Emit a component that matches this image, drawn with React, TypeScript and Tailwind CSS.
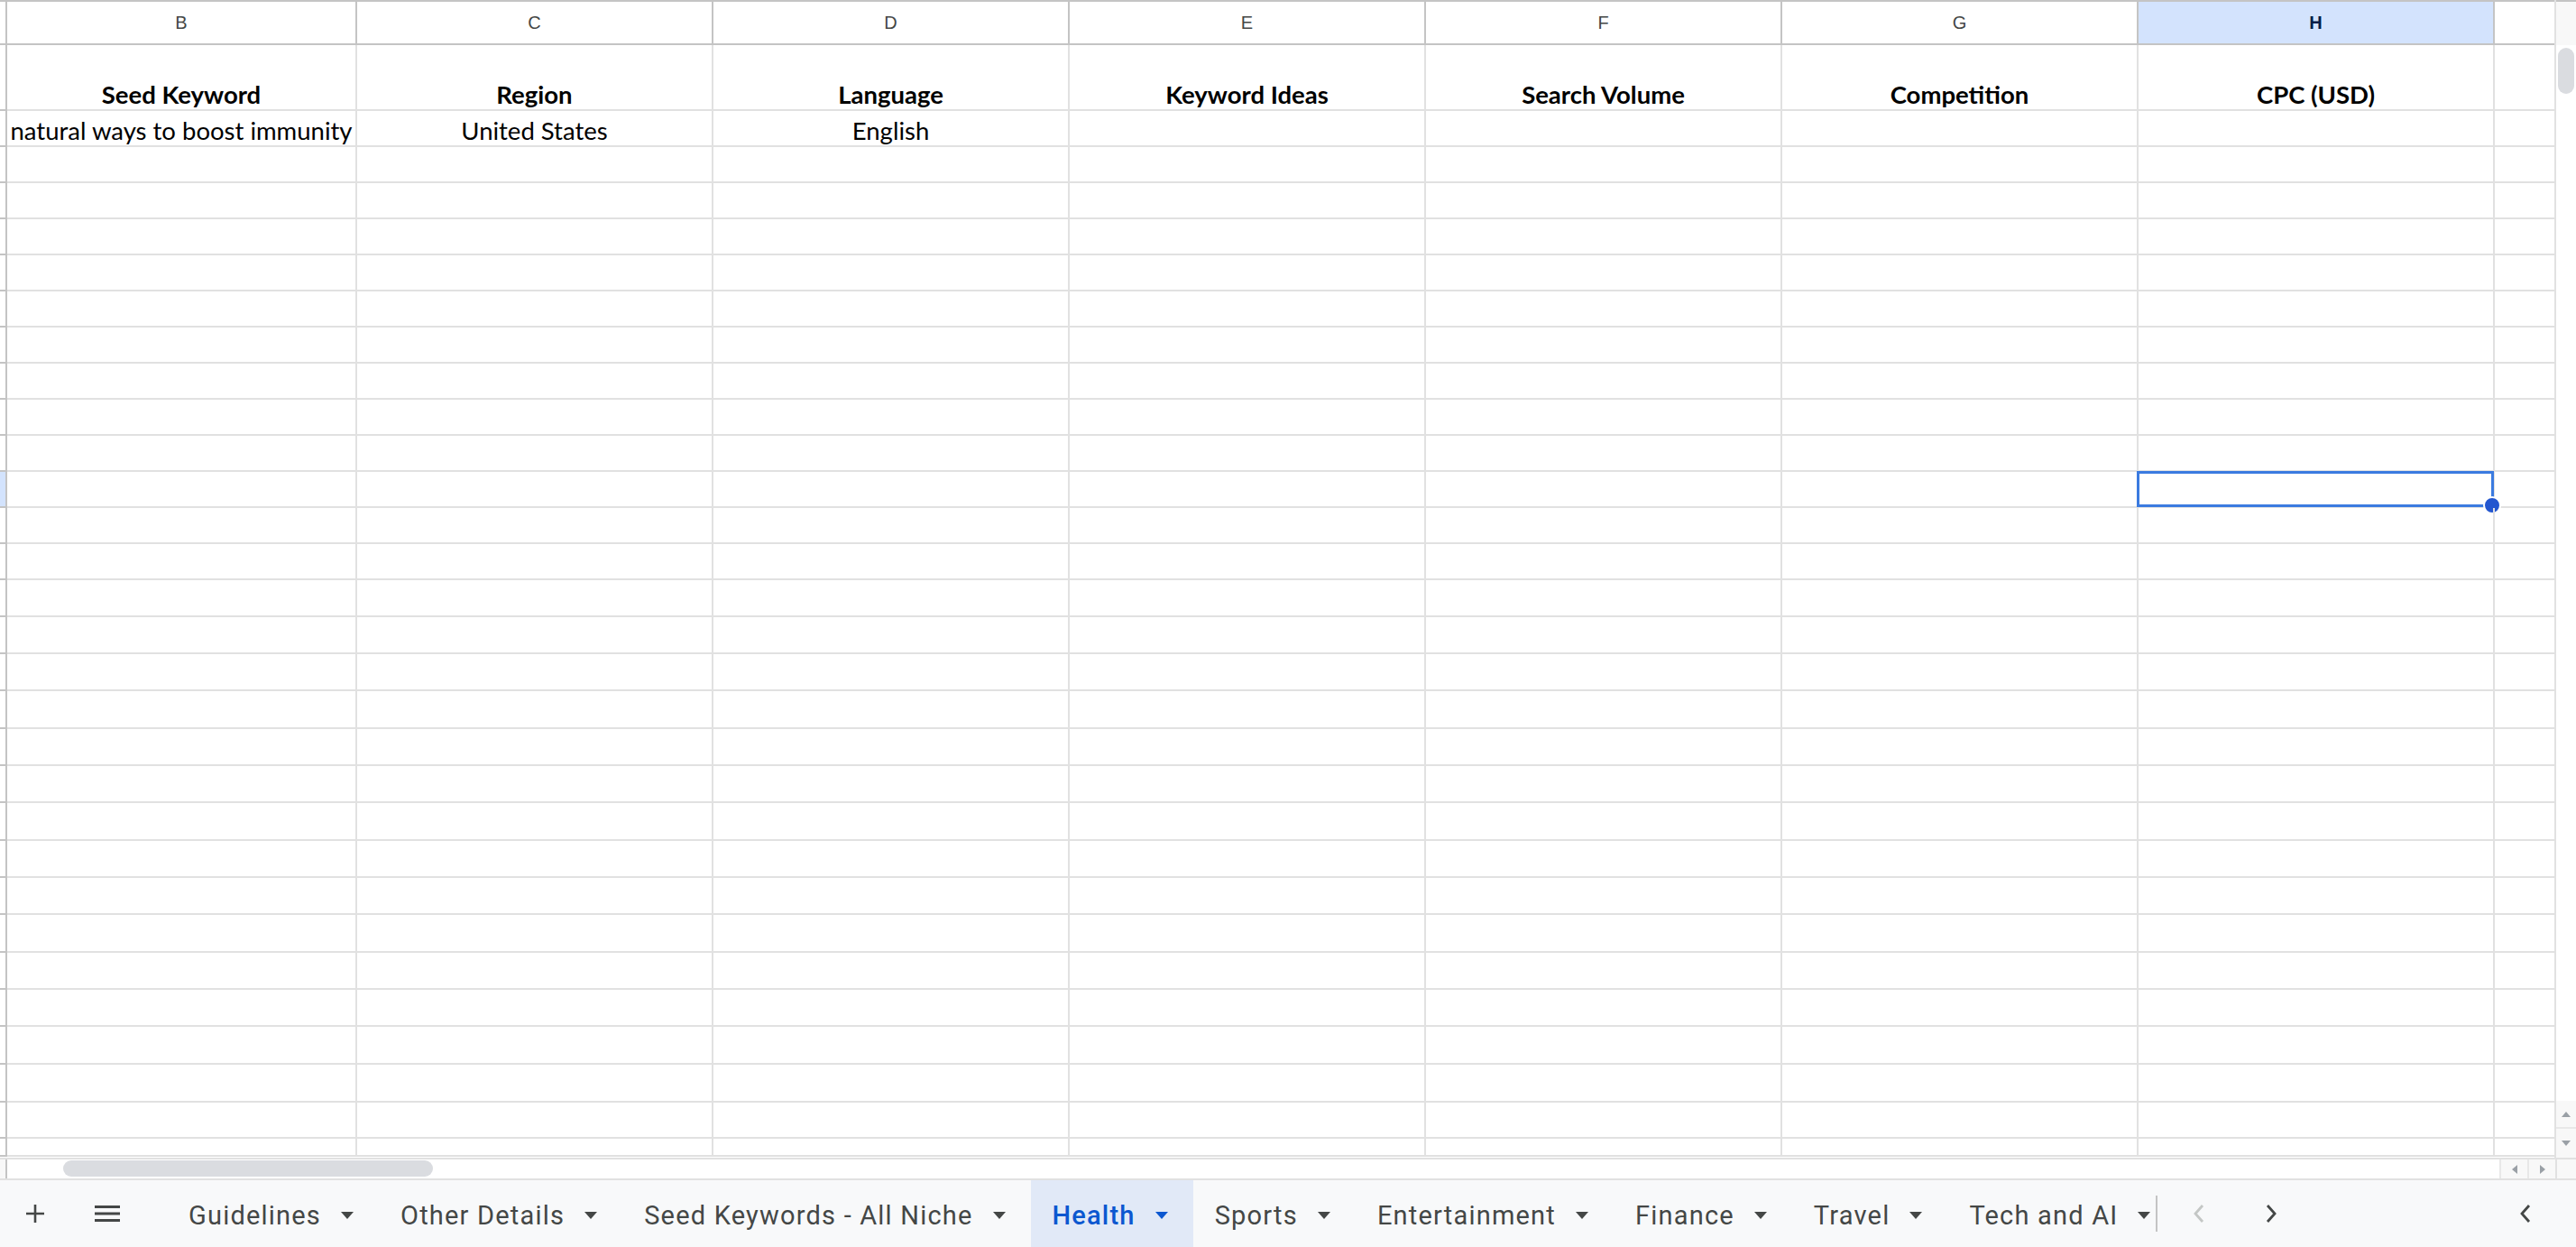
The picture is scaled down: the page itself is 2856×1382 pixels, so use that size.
import React from 'react'

const COLS = ['B', 'C', 'D', 'E', 'F', 'G', 'H']
const COL_W = ['w-[388px]', 'w-[395px]', 'w-[395px]', 'w-[395px]', 'w-[395px]', 'w-[395px]', 'w-[395px]']

const HEADERS = ['Seed Keyword', 'Region', 'Language', 'Keyword Ideas', 'Search Volume', 'Competition', 'CPC (USD)']
const FIRST = ['natural ways to boost immunity', 'United States', 'English', '', '', '', '']

// heights of rows 3..29, then the cut-off last row
const ROW_H = [
  'h-[40px]', 'h-[40px]', 'h-[40px]', 'h-[40px]', 'h-[40px]', 'h-[40px]',
  'h-[40px]', 'h-[40px]', 'h-[40px]', 'h-[40px]', 'h-[40px]', 'h-[40px]',
  'h-[41px]', 'h-[41px]', 'h-[41px]', 'h-[42px]', 'h-[41px]', 'h-[41px]',
  'h-[42px]', 'h-[41px]', 'h-[41px]', 'h-[42px]', 'h-[41px]', 'h-[41px]',
  'h-[42px]', 'h-[42px]', 'h-[40px]', 'h-[20px]',
]
const SELECTED_ROW = 9

const TABS = ['Guidelines', 'Other Details', 'Seed Keywords - All Niche', 'Health', 'Sports', 'Entertainment', 'Finance', 'Travel', 'Tech and AI']

function Row({ h, cells, bold, selected }: { h: string; cells?: string[]; bold?: boolean; selected?: boolean }) {
  return (
    <div className={`flex ${h}`}>
      <div className={`w-[8px] shrink-0 border-r-2 border-b-2 border-[#c4c4c4] ${selected ? 'bg-[#d3e3fd]' : 'bg-white'}`} />
      {COLS.map((c, i) => (
        <div
          key={c}
          className={`relative ${COL_W[i]} shrink-0 border-r-2 border-b-2 border-[#e1e1e1] flex items-end justify-center pb-[1px]`}
        >
          {cells && cells[i] && (
            <span className={`whitespace-nowrap text-[27.5px] leading-[30px] text-black ${bold ? 'font-bold' : ''}`}>{cells[i]}</span>
          )}
          {selected && c === 'H' && (
            <div className="absolute -left-[2px] -top-[1px] -right-[1px] -bottom-[1px] border-[3px] border-[#3b7be0]">
              <div className="absolute -right-[11px] -bottom-[11px] w-[20px] h-[20px] rounded-full bg-[#2356cf] border-2 border-white" />
            </div>
          )}
        </div>
      ))}
      <div className="flex-1 border-b-2 border-[#e1e1e1]" />
    </div>
  )
}

function Caret() {
  return (
    <svg width="14" height="8" viewBox="0 0 14 8" className="shrink-0">
      <path d="M0 0h14L7 8z" fill="currentColor" />
    </svg>
  )
}

function Chevron({ dir, color }: { dir: 'left' | 'right'; color: string }) {
  return (
    <svg width="14" height="22" viewBox="0 0 14 22">
      <path
        d={dir === 'left' ? 'M11 2 3 11l8 9' : 'M3 2l8 9-8 9'}
        fill="none"
        stroke={color}
        strokeWidth="2.8"
      />
    </svg>
  )
}

export default function App() {
  return (
    <div className="w-[2856px] h-[1382px] flex flex-col overflow-hidden bg-white font-['Lato',sans-serif]">
      <div className="flex h-[1283px]">
        <div className="flex-1 flex flex-col">
          {/* column letters */}
          <div className="flex h-[50px] border-t-2 border-b-2 border-[#c4c4c4] font-['Liberation_Sans',Arial,sans-serif] text-[20px]">
            <div className="w-[8px] shrink-0 border-r-2 border-[#c4c4c4]" />
            {COLS.map((c, i) => (
              <div
                key={c}
                className={`${COL_W[i]} shrink-0 border-r-2 border-[#c4c4c4] flex items-center justify-center ${
                  c === 'H' ? 'bg-[#d3e3fd] text-[#041e49] font-bold' : 'text-[#444746]'
                }`}
              >
                {c}
              </div>
            ))}
            <div className="flex-1" />
          </div>
          <Row h="h-[73px]" cells={HEADERS} bold />
          <Row h="h-[40px]" cells={FIRST} />
          {ROW_H.map((h, i) => (
            <Row key={i} h={h} selected={i === SELECTED_ROW} />
          ))}
        </div>
        {/* vertical scrollbar */}
        <div className="w-[24px] shrink-0 border-l-2 border-[#e1e1e1] flex flex-col">
          <div className="h-[50px] border-t-2 border-[#c4c4c4] bg-[#f8f8f8]" />
          <div className="flex-1 pt-[3px] pl-[2px]">
            <div className="w-[18px] h-[51px] rounded-full bg-[#dadce0]" />
          </div>
          <div className="h-[31px] bg-[#f8f8f8] border-b-2 border-[#e8e8e8] flex items-center justify-center">
            <svg width="10" height="6" viewBox="0 0 10 6"><path d="M0 6h10L5 0z" fill="#9aa0a6" /></svg>
          </div>
          <div className="h-[32px] bg-[#f8f8f8] flex items-center justify-center">
            <svg width="10" height="6" viewBox="0 0 10 6"><path d="M0 0h10L5 6z" fill="#9aa0a6" /></svg>
          </div>
        </div>
      </div>

      {/* horizontal scrollbar */}
      <div className="flex h-[23px] border-t-2 border-[#e1e1e1]">
        <div className="w-[8px] shrink-0 border-r-2 border-[#c4c4c4] bg-[#f8f8f8]" />
        <div className="flex-1 pl-[62px] pt-[1px]">
          <div className="w-[410px] h-[18px] rounded-full bg-[#dadce0]" />
        </div>
        <div className="w-[31px] border-l-2 border-[#e8e8e8] bg-[#f8f8f8] flex items-center justify-center">
          <svg width="6" height="10" viewBox="0 0 6 10"><path d="M6 0v10L0 5z" fill="#9aa0a6" /></svg>
        </div>
        <div className="w-[31px] border-l-2 border-[#e8e8e8] bg-[#f8f8f8] flex items-center justify-center">
          <svg width="6" height="10" viewBox="0 0 6 10"><path d="M0 0v10l6-5z" fill="#9aa0a6" /></svg>
        </div>
        <div className="w-[23px] border-l-2 border-[#e1e1e1] bg-[#f8f8f8]" />
      </div>

      {/* sheet tabs */}
      <div className="flex-1 flex items-center border-t-2 border-[#e1e1e1] bg-[#f8f9fa] font-['Roboto',sans-serif]">
        <div className="w-[78px] shrink-0 flex justify-center">
          <svg width="20" height="20" viewBox="0 0 20 20">
            <path d="M10 0v20M0 10h20" stroke="#444746" strokeWidth="2.6" />
          </svg>
        </div>
        <div className="w-[82px] shrink-0 flex justify-center">
          <svg width="28" height="18" viewBox="0 0 28 18">
            <path d="M0 1.5h28M0 9h28M0 16.5h28" stroke="#444746" strokeWidth="2.8" />
          </svg>
        </div>
        <div className="ml-[25px] w-[2205px] shrink-0 h-full flex overflow-hidden">
          {TABS.map(t => (
            <div
              key={t}
              className={`h-full shrink-0 flex items-center pl-[24px] pr-[28px] gap-[22px] pt-[4px] ${
                t === 'Health' ? 'bg-[#e1e9f7] text-[#0b57d0] font-medium' : 'text-[#444746]'
              }`}
            >
              <span className="text-[29px] leading-none tracking-[1.2px] whitespace-nowrap">{t}</span>
              <Caret />
            </div>
          ))}
        </div>
        <div className="w-[2px] h-[40px] bg-[#c4c4c4] shrink-0" />
        <div className="ml-[6px] w-[80px] flex justify-center">
          <Chevron dir="left" color="#c4c7c5" />
        </div>
        <div className="w-[80px] flex justify-center">
          <Chevron dir="right" color="#444746" />
        </div>
        <div className="flex-1" />
        <div className="w-[80px] mr-[16px] flex justify-center">
          <Chevron dir="left" color="#444746" />
        </div>
      </div>
    </div>
  )
}
